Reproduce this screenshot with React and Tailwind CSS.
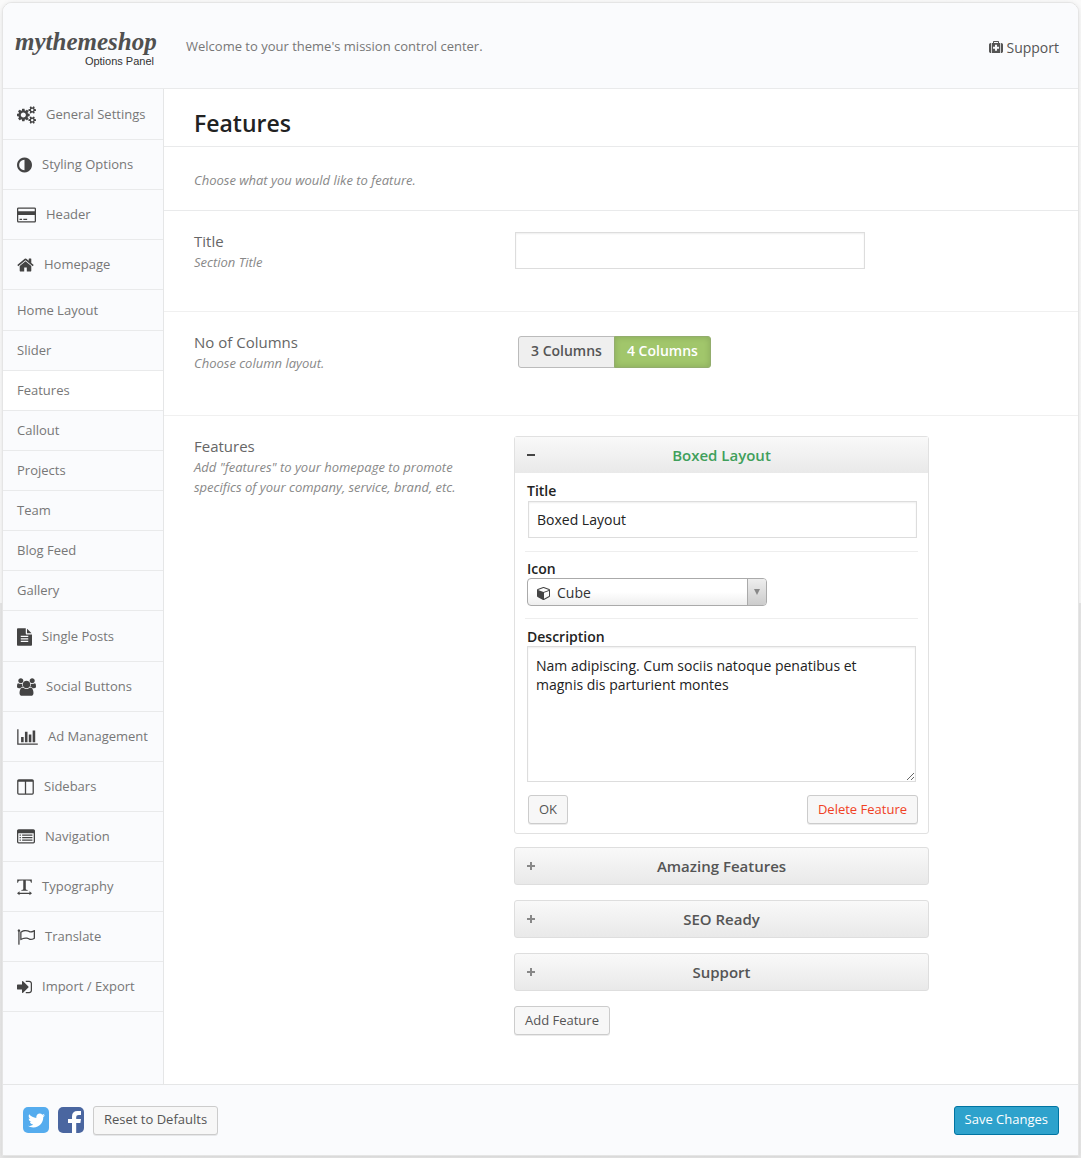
import { useState } from "react";
import { FaTwitter } from "react-icons/fa";

const COG =
  "v140q0 16-149 31-12 27-30 52 51 113 51 138 0 4-4 7-122 71-124 71-8 0-46-47t-52-68q-20 2-30 2t-30-2q-14 21-52 68t-46 47q-2 0-124-71-4-3-4-7 0-25 51-138-18-25-30-52-149-15-149-31v-140q0-16 149-31 13-29 30-52-51-113-51-138 0-4 4-7 4-2 35-20t59-34 30-16q8 0 46 46.5t52 67.5q20-2 30-2t30 2q51-71 92-112l6-2q4 0 124 70 4 3 4 7 0 25-51 138 17 23 30 52 149 15 149 31z";

const ICONS = {
  cogs: {
    box: "0 0 1920 1792",
    d:
      "M896 896q0-106-75-181t-181-75-181 75-75 181 75 181 181 75 181-75 75-181zm768 512q0-52-38-90t-90-38-90 38-38 90q0 53 37.5 90.5t90.5 37.5 90.5-37.5 37.5-90.5zm0-1024q0-52-38-90t-90-38-90 38-38 90q0 53 37.5 90.5t90.5 37.5 90.5-37.5 37.5-90.5zm-384 421v185q0 10-7 19.5t-16 10.5l-155 24q-11 35-32 76 34 48 90 115 7 11 7 20 0 12-7 19-23 30-82.5 89.5t-78.5 59.5q-11 0-21-7l-115-90q-37 19-77 31-11 108-23 155-7 24-30 24h-186q-11 0-20-7.5t-10-17.5l-23-153q-34-10-75-31l-118 89q-7 7-20 7-11 0-21-8-144-133-144-160 0-9 7-19 10-14 41-53t47-61q-23-44-35-82l-152-24q-10-1-17-9.5t-7-19.5v-185q0-10 7-19.5t16-10.5l155-24q11-35 32-76-34-48-90-115-7-11-7-20 0-12 7-20 22-30 82-89t79-59q11 0 21 7l115 90q34-18 77-32 11-108 23-154 7-24 30-24h186q11 0 20 7.5t10 17.5l23 153q34 10 75 31l118-89q8-7 20-7 11 0 21 8 144 133 144 160 0 8-7 19-12 16-42 54t-45 60q23 48 34 82l152 23q10 2 17 10.5t7 19.5z" +
      "M1920 1338" + COG + "M1920 314" + COG,
  },
  adjust: {
    box: "128 0 1536 1792",
    d: "M896 1440v-1088q-148 0-273 73t-198 198-73 273 73 273 198 198 273 73zm768-544q0 209-103 385.5t-279.5 279.5-385.5 103-385.5-103-279.5-279.5-103-385.5 103-385.5 279.5-279.5 385.5-103 385.5 103 279.5 279.5 103 385.5z",
  },
  card: {
    box: "0 0 1920 1792",
    d: "M1760 128q66 0 113 47t47 113v1216q0 66-47 113t-113 47h-1600q-66 0-113-47t-47-113v-1216q0-66 47-113t113-47h1600zm-1600 128q-13 0-22.5 9.5t-9.5 22.5v224h1664v-224q0-13-9.5-22.5t-22.5-9.5h-1600zm1600 1280q13 0 22.5-9.5t9.5-22.5v-608h-1664v608q0 13 9.5 22.5t22.5 9.5h1600zm-1504-128v-128h256v128h-256zm384 0v-128h384v128h-384z",
  },
  home: {
    box: "0 0 1664 1792",
    d: "M1408 992v480q0 26-19 45t-45 19h-384v-384h-256v384h-384q-26 0-45-19t-19-45v-480q0-1 .5-3t.5-3l575-474 575 474q1 2 1 6zm223-69l-62 74q-8 9-21 11h-3q-13 0-21-7l-692-577-692 577q-12 8-24 7-13-2-21-11l-62-74q-8-10-7-23.5t11-21.5l719-599q32-26 76-26t76 26l244 204v-195q0-14 9-23t23-9h192q14 0 23 9t9 23v408l219 182q10 8 11 21.5t-7 23.5z",
  },
  file: {
    box: "128 0 1536 1792",
    d: "M1152 512v-472q22 14 36 28l408 408q14 14 28 36h-472zM1024 544q0 40 28 68t68 28h544v1056q0 40-28 68t-68 28h-1344q-40 0-68-28t-28-68v-1600q0-40 28-68t68-28h800v544zM512 768v128h768v-128zM512 1024v128h768v-128zM512 1280v128h768v-128z",
  },
  users: {
    box: "0 0 1920 1792",
    d: "M593 896q-162 5-265 128h-134q-82 0-138-40.5t-56-118.5q0-353 124-353 6 0 43.5 21t97.5 42.5 119 21.5q67 0 133-23-5 37-5 66 0 138 81 256zm1071 637q0 120-73 189.5t-194 69.5h-874q-121 0-194-69.5t-73-189.5q0-53 3.5-103.5t14-109 26.5-108.5 43-97.5 62-81 85.5-53.5 111.5-20q10 0 43 21.5t73 48 107 48 135 21.5 135-21.5 107-48 73-48 43-21.5q61 0 111.5 20t85.5 53.5 62 81 43 97.5 26.5 108.5 14 109 3.5 103.5zm-1024-1277q0 106-75 181t-181 75-181-75-75-181 75-181 181-75 181 75 75 181zm704 384q0 159-112.5 271.5t-271.5 112.5-271.5-112.5-112.5-271.5 112.5-271.5 271.5-112.5 271.5 112.5 112.5 271.5zm576 225q0 78-56 118.5t-138 40.5h-134q-103-123-265-128 81-118 81-256 0-29-5-66 66 23 133 23 59 0 119-21.5t97.5-42.5 43.5-21q124 0 124 353zm-128-609q0 106-75 181t-181 75-181-75-75-181 75-181 181-75 181 75 75 181z",
  },
  chart: {
    box: "0 0 2048 1792",
    d: "M640 896v512h-256v-512h256zm384-512v1024h-256v-1024h256zm1024 1152v128h-2048v-1536h128v1408h1920zm-640-896v768h-256v-768h256zm384-384v1152h-256v-1152h256z",
  },
  columns: {
    box: "0 0 1664 1792",
    d: "M160 1536h608v-1152h-640v1120q0 13 9.5 22.5t22.5 9.5zm1376-32v-1120h-640v1152h608q13 0 22.5-9.5t9.5-22.5zm128-1216v1216q0 66-47 113t-113 47h-1344q-66 0-113-47t-47-113v-1216q0-66 47-113t113-47h1344q66 0 113 47t47 113z",
  },
  list: {
    box: "0 0 1792 1792",
    d: "M256 1152h128v128h-128zM256 896h128v128h-128zM256 640h128v128h-128zM512 1152h1024v128h-1024zM512 896h1024v128h-1024zM512 640h1024v128h-1024zM1664 1376v-832q0-13-9.5-22.5t-22.5-9.5h-1472q-13 0-22.5 9.5t-9.5 22.5v832q0 13 9.5 22.5t22.5 9.5h1472q13 0 22.5-9.5t9.5-22.5zm128-1088v1088q0 66-47 113t-113 47h-1472q-66 0-113-47t-47-113v-1088q0-66 47-113t113-47h1472q66 0 113 47t47 113z",
  },
  textWidth: {
    box: "0 0 1536 1792",
    d: "M20 128H1516V470H1430Q1400 290 1330 250Q1260 222 900 226V1080Q900 1160 960 1180L1090 1210V1280H446V1210L580 1180Q640 1160 640 1080V226Q280 222 206 250Q136 290 106 470H20ZM0 1536L260 1330V1472H1276V1330L1536 1536L1276 1742V1600H260V1742Z",
  },
  flag: {
    box: "0 0 1792 1792",
    d: "M1664 985v-616q-169 91-306 91-82 0-145-32-100-49-184-76.5t-178-27.5q-173 0-403 127v599q245-113 433-113 55 0 103.5 7.5t98 26 77 31 82.5 39.5l28 14q44 22 101 22 120 0 293-92zm-1344-729q0 35-17.5 64t-46.5 46v1266q0 14-9 23t-23 9h-64q-14 0-23-9t-9-23v-1266q-29-17-46.5-46t-17.5-64q0-53 37.5-90.5t90.5-37.5 90.5 37.5 37.5 90.5zm1472 0v763q0 39-35 57-10 5-17 9-218 116-369 116-88 0-158-35l-28-14q-64-33-99-48t-91-29-114-14q-102 0-235.5 44t-228.5 102q-15 9-33 9-16 0-32-8-32-19-32-56v-742q0-35 31-55 35-21 78.5-42.5t114-52 152.5-49.5 155-19q112 0 209 31t209 86q38 19 89 19 122 0 310-112 22-12 31-17 31-16 62 2 31 20 31 54z",
  },
  signIn: {
    box: "0 0 1536 1792",
    d: "M1184 896q0 26-19 45l-544 544q-19 19-45 19t-45-19-19-45v-288h-448q-26 0-45-19t-19-45v-384q0-26 19-45t45-19h448v-288q0-26 19-45t45-19 45 19l544 544q19 19 19 45zm352-352v704q0 119-84.5 203.5t-203.5 84.5h-320q-13 0-22.5-9.5t-9.5-22.5q0-4-1-20t-.5-26.5 3-23.5 10-19.5 20.5-6.5h320q66 0 113-47t47-113v-704q0-66-47-113t-113-47h-312l-11.5-1-11.5-3-8-5.5-7-9-2-13.5q0-4-1-20t-.5-26.5 3-23.5 10-19.5 20.5-6.5h320q119 0 203.5 84.5t84.5 203.5z",
  },
  medkit: {
    box: "0 0 1792 1792",
    d: "M1280 864h-256v-256h-256v256h-256v256h256v256h256v-256h256zM640 384h512v-128h-512zM256 384v1280h-32q-92 0-158-66t-66-158v-832q0-92 66-158t158-66h32zM1440 384v1280h-1088v-1280h160v-160q0-40 28-68t68-28h576q40 0 68 28t28 68v160h160zM1792 608v832q0 92-66 158t-158 66h-32v-1280h32q92 0 158 66t66 158z",
  },
  cube: {
    box: "0 0 1664 1792",
    d: "M896 1629l640-349v-636l-640 233v752zm-64-865l698-254-698-254-698 254zm832-252v768q0 35-18 65t-49 47l-704 384q-28 16-61 16t-61-16l-704-384q-31-17-49-47t-18-65v-768q0-40 23-73t61-47l704-256q22-8 44-8t44 8l704 256q38 14 61 47t23 73z",
  },
};

const Icon = ({ name, className }) => (
  <svg viewBox={ICONS[name].box} fill="currentColor" fillRule="evenodd" aria-hidden="true" className={className}>
    <path d={ICONS[name].d} />
  </svg>
);

const topMenu = [
  { text: "General Settings", icon: "cogs", size: "w-[19px]" },
  { text: "Styling Options", icon: "adjust", size: "w-[15px]" },
  { text: "Header", icon: "card", size: "w-[19px]" },
  { text: "Homepage", icon: "home", size: "w-[17px]" },
];

const subMenu = ["Home Layout", "Slider", "Features", "Callout", "Projects", "Team", "Blog Feed", "Gallery"];

const bottomMenu = [
  { text: "Single Posts", icon: "file", size: "w-[15px]" },
  { text: "Social Buttons", icon: "users", size: "w-[19px]" },
  { text: "Ad Management", icon: "chart", size: "w-[21px]" },
  { text: "Sidebars", icon: "columns", size: "w-[17px]" },
  { text: "Navigation", icon: "list", size: "w-[18px]" },
  { text: "Typography", icon: "textWidth", size: "w-[15px]" },
  { text: "Translate", icon: "flag", size: "w-[18px]" },
  { text: "Import / Export", icon: "signIn", size: "w-[15px]" },
];

const MenuItem = ({ item }) => (
  <li>
    <a href="#" className="flex h-[50px] items-center gap-[10px] border-b border-[#e9eaeb] pl-[14px]">
      <Icon name={item.icon} className={`h-[18px] shrink-0 text-[#444] ${item.size}`} />
      {item.text}
    </a>
  </li>
);

const Sidebar = () => (
  <nav className="w-[161px] shrink-0 border-r border-[#e5e6e7] bg-[#fafbfd] pt-px text-[13px] text-[#777]">
    <ul>
      {topMenu.map((item) => (
        <MenuItem key={item.text} item={item} />
      ))}
    </ul>
    <ul className="py-px">
      {subMenu.map((text) => (
        <li key={text}>
          <a
            href="#"
            className={`flex h-10 items-center border-b border-[#e9eaeb] pl-[14px] ${text === "Features" ? "bg-white" : ""}`}
          >
            {text}
          </a>
        </li>
      ))}
    </ul>
    <ul>
      {bottomMenu.map((item) => (
        <MenuItem key={item.text} item={item} />
      ))}
    </ul>
  </nav>
);

const Button = ({ children, className = "text-[#555]" }) => (
  <button
    type="button"
    className={`h-[29px] rounded-[3px] border border-[#ccc] bg-[#f7f7f7] px-[10px] text-[13px] shadow-[0_1px_0_rgba(0,0,0,0.08)] ${className}`}
  >
    {children}
  </button>
);

const Field = ({ title, htmlFor, description, className, children }) => {
  const Title = htmlFor ? "label" : "h2";
  return (
    <div className={`grid grid-cols-[290px_minmax(0,1fr)] gap-[30px] px-[30px] pt-5 ${className}`}>
      <div>
        <Title htmlFor={htmlFor} className="block text-[15px] leading-5 text-[#666]">
          {title}
        </Title>
        <p className="mt-px max-w-[270px] text-[13px] italic leading-5 text-[#888]">{description}</p>
      </div>
      <div>{children}</div>
    </div>
  );
};

const ColumnSwitch = () => {
  const [active, setActive] = useState(4);
  return (
    <div role="group" aria-label="No of Columns" className="ml-1 mt-1 flex h-8 text-[14px] font-semibold leading-5">
      <button
        type="button"
        onClick={() => setActive(3)}
        className={`rounded-l-[3px] border px-3 pb-[2px] ${active === 3 ? "border-[#93ad6d] bg-[#a1c66b] text-white" : "border-[#bbb] bg-[#efefef] text-[#555]"}`}
      >
        3 Columns
      </button>
      <button
        type="button"
        onClick={() => setActive(4)}
        className={`-ml-px rounded-r-[3px] border px-3 pb-[2px] ${active === 4 ? "border-[#93ad6d] bg-[#a1c66b] text-white shadow-[inset_0_0_6px_rgba(0,0,0,0.15)]" : "border-[#bbb] bg-[#efefef] text-[#555]"}`}
      >
        4 Columns
      </button>
    </div>
  );
};

const BoxedLayout = () => (
  <section className="rounded-[3px] border border-[#e1e1e1]">
    <button
      type="button"
      className="flex h-9 w-full items-center bg-gradient-to-b from-[#f9f9f9] to-[#e9e9e9] px-3 text-[15px] font-semibold text-[#409f5b]"
    >
      <svg viewBox="0 0 8 8" className="h-2 w-2" aria-hidden="true">
        <path d="M0 3h8v2H0z" fill="#444" />
      </svg>
      <span className="flex-1 pr-2">Boxed Layout</span>
    </button>
    <div className="px-[10px] pb-[9px] pt-2 text-[14px] text-[#222]">
      <div className="border-b border-[#eee] pb-[13px]">
        <label htmlFor="feature-title" className="block px-[2px] font-semibold leading-5">
          Title
        </label>
        <input
          id="feature-title"
          defaultValue="Boxed Layout"
          className="ml-[3px] h-[37px] w-[389px] max-w-full border border-[#ddd] bg-white px-2 shadow-[inset_0_1px_2px_rgba(0,0,0,0.07)]"
        />
      </div>
      <div className="border-b border-[#eee] px-[2px] pb-3 pt-2">
        <label htmlFor="feature-icon" className="block font-semibold leading-[18px]">
          Icon
        </label>
        <div className="relative h-7 w-60">
          <select
            id="feature-icon"
            className="h-full w-full appearance-none rounded-[4px] border border-[#aaa] bg-gradient-to-b from-white from-50% to-[#eee] pl-[29px] text-[14px] text-[#333]"
          >
            <option>Cube</option>
          </select>
          <Icon name="cube" className="pointer-events-none absolute left-[10px] top-2 h-[14px] w-[13px] text-[#444]" />
          <span className="pointer-events-none absolute bottom-px right-px top-px flex w-[19px] justify-center rounded-r-[3px] border-l border-[#aaa] bg-gradient-to-b from-[#eee] to-[#ccc] pt-[10px]">
            <svg viewBox="0 0 6 6" className="h-[6px] w-[6px]" aria-hidden="true">
              <path d="M0 0h6L3 6z" fill="#888" />
            </svg>
          </span>
        </div>
      </div>
      <div className="px-[2px] pt-2">
        <label htmlFor="feature-description" className="block font-semibold leading-[19px]">
          Description
        </label>
        <textarea
          id="feature-description"
          defaultValue="Nam adipiscing. Cum sociis natoque penatibus et magnis dis parturient montes"
          className="block h-[136px] w-[389px] max-w-full border border-[#ddd] bg-white px-2 py-[9px] leading-[19px] shadow-[inset_0_1px_2px_rgba(0,0,0,0.07)]"
        />
      </div>
      <div className="mt-[13px] flex justify-between pl-[3px]">
        <Button>OK</Button>
        <Button className="text-[#f04124]">Delete Feature</Button>
      </div>
    </div>
  </section>
);

const CollapsedFeature = ({ title }) => (
  <button
    type="button"
    className="flex h-[38px] w-full items-center rounded-[3px] border border-[#dedede] bg-gradient-to-b from-[#f9f9f9] to-[#e9e9e9] px-3 text-[15px] font-semibold text-[#555]"
  >
    <svg viewBox="0 0 8 8" className="h-2 w-2" aria-hidden="true">
      <path d="M3 0h2v3h3v2H5v3H3V5H0V3h3z" fill="#888" />
    </svg>
    <span className="flex-1 pr-2">{title}</span>
  </button>
);

const App = () => {
  return (
    <div className="bg-linear-to-b from-[#fafafa] from-52% to-[#e8e8e8] to-52% px-[2px] pb-[3px] pt-[2px] font-['Open_Sans',sans-serif]">
      <div className="overflow-hidden rounded-t-[10px] border border-[#e5e5e5] bg-white shadow-[0_1px_5px_rgba(0,0,0,0.1)]">
        <header className="flex h-[86px] items-center border-b border-[#e9eaeb] bg-[#fafbfd] pr-[19px] pt-[3px]">
          <div className="w-[183px] pl-3">
            <div className="w-[139px] text-right">
              <div className="font-['Liberation_Serif',serif] text-[25px] font-bold italic leading-[27px] text-[#505050]">
                mythemeshop
              </div>
              <div className="font-['Liberation_Sans',sans-serif] text-[11px] leading-3 text-[#333]">Options Panel</div>
            </div>
          </div>
          <p className="text-[13px] text-[#777]">Welcome to your theme's mission control center.</p>
          <a href="#" className="ml-auto flex items-center gap-[3px] text-[14px] text-[#555]">
            <Icon name="medkit" className="h-[14px] w-[14px]" />
            Support
          </a>
        </header>

        <div className="flex">
          <Sidebar />
          <main className="min-w-0 flex-1">
            <h1 className="h-[58px] border-b border-[#e9eaeb] px-[30px] pt-[18px] text-[23px] font-semibold leading-8 text-[#222]">
              Features
            </h1>
            <p className="h-16 border-b border-[#e9eaeb] px-[30px] pt-[23px] text-[13px] italic leading-5 text-[#888]">
              Choose what you would like to feature.
            </p>
            <Field
              title="Title"
              htmlFor="section-title"
              description="Section Title"
              className="min-h-[101px] border-b border-[#f0f0f0]"
            >
              <input
                id="section-title"
                className="ml-px mt-px h-[37px] w-[350px] max-w-full border border-[#ddd] bg-white px-2 text-[14px] shadow-[inset_0_1px_2px_rgba(0,0,0,0.07)]"
              />
            </Field>
            <Field
              title="No of Columns"
              description="Choose column layout."
              className="min-h-[104px] border-b border-[#f0f0f0]"
            >
              <ColumnSwitch />
            </Field>
            <Field
              title="Features"
              description={'Add "features" to your homepage to promote specifics of your company, service, brand, etc.'}
              className="pb-[49px]"
            >
              <div className="max-w-[415px]">
                <BoxedLayout />
                <div className="mb-[15px] mt-[13px] flex flex-col gap-[15px]">
                  <CollapsedFeature title="Amazing Features" />
                  <CollapsedFeature title="SEO Ready" />
                  <CollapsedFeature title="Support" />
                </div>
                <Button>Add Feature</Button>
              </div>
            </Field>
          </main>
        </div>

        <footer className="flex h-[71px] items-center gap-[9px] border-t border-[#e5e6e7] bg-[#fafbfd] pl-5 pr-[19px]">
          <a
            href="#"
            aria-label="Twitter"
            className="flex h-[26px] w-[26px] items-center justify-center rounded-[5px] bg-[#55acee] text-white"
          >
            <FaTwitter className="h-[17px] w-[17px]" />
          </a>
          <a href="#" aria-label="Facebook" className="block h-[26px] w-[26px] overflow-hidden rounded-[5px] bg-[#4a66a0]">
            <svg viewBox="0 0 26 26" className="h-full w-full" aria-hidden="true">
              <path
                d="M14 26V16h-4v-4h4V9.500Q14 4 19.500 4H23v4h-2.500Q18.200 8 18.200 10v2H23l-.6 4h-4.200V26z"
                fill="#fff"
              />
            </svg>
          </a>
          <Button>Reset to Defaults</Button>
          <button
            type="button"
            className="ml-auto h-[29px] rounded-[3px] border border-[#0074a2] bg-[#2ea2cc] px-[10px] text-[13px] text-white"
          >
            Save Changes
          </button>
        </footer>
      </div>
    </div>
  );
};

export default App;
